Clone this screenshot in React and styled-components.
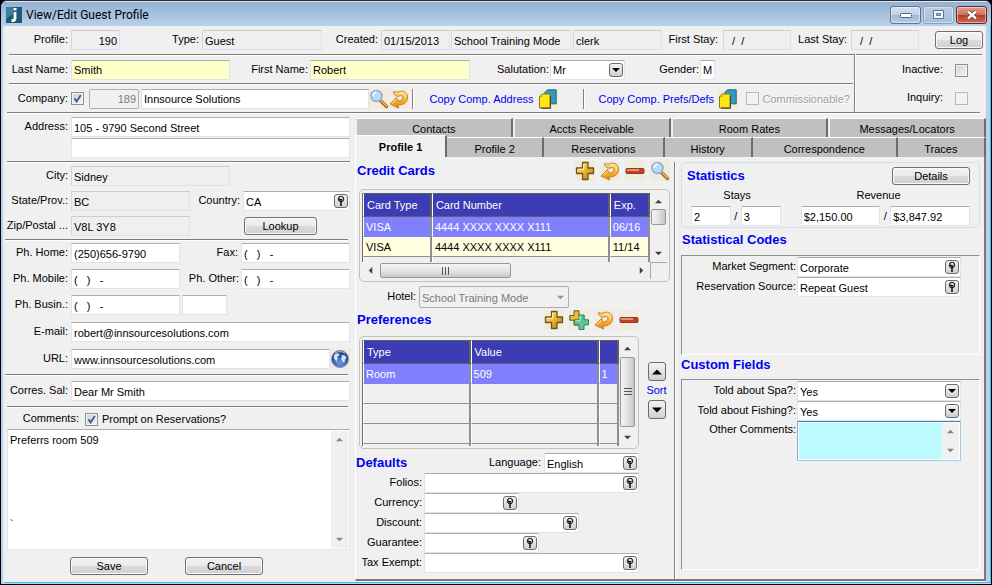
import React from "react";
import styled, { createGlobalStyle, css } from "styled-components";

const GlobalStyle = createGlobalStyle`
  * { box-sizing: border-box; }
  html, body { margin: 0; background: #000; }
  body, input, select, textarea, button, table {
    font-family: "Liberation Sans", Arial, sans-serif;
    font-size: 11px;
    color: #000;
  }
`;

/* ---------- window frame ---------- */

const Frame = styled.div`
  min-height: 100vh;
  display: flex;
  flex-direction: column;
  border: 1px solid #000;
  border-top-color: #2b2b30;
  border-radius: 7px 7px 0 0;
  background: #b9d1ea;
  overflow: hidden;
`;

const TitleBar = styled.header`
  flex: none;
  height: 25px;
  display: flex;
  align-items: center;
  gap: 4px;
  padding: 1px 4px 0 5px;
  border-top: 1px solid #dfe9f5;
  background: linear-gradient(#94b1d3, #b9d1ea);
`;

const Title = styled.h1`
  flex: 1;
  margin: 0;
  font: 12px Roboto, "Open Sans", sans-serif;
  line-height: 18px;
`;

const CaptionButton = styled.button`
  width: 31px;
  height: 18px;
  padding: 0;
  display: grid;
  place-items: center;
  border: 1px solid ${(p) => (p.$close ? "#5c2a2c" : p.$dim ? "#8ba2bd" : "#5d7390")};
  border-radius: 3px;
  box-shadow: inset 0 0 0 1px rgba(255, 255, 255, 0.45);
  background: ${(p) =>
    p.$close
      ? "linear-gradient(#e3a093 0%, #d2705f 48%, #bb3a25 50%, #cf6a4f 100%)"
      : p.$dim
        ? "linear-gradient(#b9cde4, #a6bedb)"
        : "linear-gradient(#d3e0ef 0%, #bfd1e6 48%, #9fb7d3 50%, #b8cde5 100%)"};
`;

const CaptionButtons = styled.div`
  display: flex;
  gap: 2px;
`;

const Client = styled.main`
  flex: 1;
  display: flex;
  flex-direction: column;
  margin: 0 0 1px 2px;
  border-left: 2px solid #e4eefa;
  border-right: 1px solid #35c3f3;
  border-bottom: 1px solid #35c3f3;
  padding: 0 4px 1px 0;
  background: linear-gradient(to left, #b9d1ea 4px, #f0f0f0 4px);
`;

/* ---------- shared parts ---------- */

const Row = styled.div`
  flex: none;
  display: flex;
  align-items: center;
  min-height: 20px;
  min-width: 0;
  margin-top: ${(p) => p.$top || 0}px;
  padding-right: ${(p) => p.$end || 0}px;
`;

const Label = styled.label`
  flex: none;
  width: ${(p) => p.$w}px;
  padding: 0 ${(p) => p.$pad ?? 3}px 2px 0;
  text-align: right;
  white-space: nowrap;
  line-height: 16px;
`;

const Spacer = styled.div`
  flex: ${(p) => (p.$grow ? `${p.$w} 1 ${p.$w}px` : `0 0 ${p.$w}px`)};
`;

const Divider = styled.hr`
  flex: none;
  width: auto;
  height: 2px;
  margin: ${(p) => p.$m || "0"};
  border: 0;
  border-top: 1px solid #7d7d7d;
  background: #fff;
`;

const sunken = css`
  border: 1px solid #e0e3ea;
  border-top-color: #abadb3;
  border-radius: 1px;
  background: #fff;
`;

const sized = css`
  flex: ${(p) => (p.$fixed ? `0 0 ${p.$w}px` : `${p.$w} 1 ${p.$w}px`)};
  min-width: 0;
  width: 0;
`;

const Input = styled.input`
  ${sunken}
  ${sized}
  height: 20px;
  padding: 1px 2px 0;
  outline: 0;
  text-align: ${(p) => p.$align || "left"};
  ${(p) => p.readOnly && "background: #efefef; border-color: #c9ccd2 #dde2ea #dde2ea #d2d6dc;"}
  ${(p) => p.$required && "background: #ffffc8;"}
  ${(p) => p.disabled && "background: #f0f0f0; color: #7d7d7d; border-color: #afafaf; border-radius: 2px;"}
`;

const Combo = styled.div`
  ${sunken}
  ${sized}
  display: flex;
  align-items: center;
  height: 20px;
  padding-right: 1px;
`;

const ComboInput = styled.input`
  flex: 1;
  width: 0;
  min-width: 0;
  height: 18px;
  padding: 1px 2px 0;
  border: 0;
  outline: 0;
  background: none;
`;

const ComboSelect = styled.select`
  flex: 1;
  height: 18px;
  padding: 1px 2px 0;
  border: 0;
  outline: 0;
  appearance: none;
  background: none;
`;

const chip = css`
  flex: none;
  width: 14px;
  height: 14px;
  padding: 0;
  display: grid;
  place-items: center;
  border: 1px solid #6a6a6a;
  border-radius: 3px;
  background: linear-gradient(#f4f4f4, #cfcfcf);
`;

const Chip = styled.button`
  ${chip}
`;

const ArrowChip = styled.span`
  ${chip}
  pointer-events: none;
`;

const PushButton = styled.button`
  flex: none;
  width: ${(p) => p.$w}px;
  height: 18px;
  padding: 0;
  border: 1px solid #707070;
  border-radius: 3px;
  box-shadow: inset 0 0 0 1px #fafafa;
  background: linear-gradient(#f2f2f2 0%, #ebebeb 48%, #dcdcdc 52%, #cfcfcf 100%);
  line-height: 15px;
`;

const Check = styled.input.attrs({ type: "checkbox" })`
  flex: none;
  appearance: none;
  width: 13px;
  height: 13px;
  margin: 0;
  border: 1px solid ${(p) => (p.$dim ? "#b8b8b8" : "#8e8f8f")};
  box-shadow: inset 0 0 0 1px #f4f4f4;
  background: ${(p) => (p.$dim ? "#f2f2f2" : "linear-gradient(135deg, #cbcfd5, #f6f6f6)")};
  &:checked {
    background: url("data:image/svg+xml,%3Csvg xmlns='http://www.w3.org/2000/svg' viewBox='0 0 11 11'%3E%3Cpath d='M2.5 5.2 4.6 8.4 8.8 2' fill='none' stroke='%23435a9c' stroke-width='1.9'/%3E%3C/svg%3E"),
      linear-gradient(135deg, #cbcfd5, #f6f6f6);
  }
`;

const IconButton = styled.button`
  flex: none;
  width: 20px;
  height: 20px;
  padding: 0;
  border: 0;
  background: #efebdd;
  svg { display: block; }
`;

const ActionLink = styled.a`
  flex: none;
  width: ${(p) => p.$w}px;
  color: #0000f0;
  text-decoration: none;
  white-space: nowrap;
`;

const VLine = styled.span`
  flex: none;
  width: 2px;
  height: 20px;
  border-left: 1px solid #808080;
  background: #fff;
`;

const Heading = styled.h2`
  flex: ${(p) => (p.$grow ? 1 : "none")};
  margin: 0;
  font-size: 13px;
  line-height: 18px;
  font-weight: bold;
  color: #0000f0;
  white-space: nowrap;
`;

/* ---------- icons ---------- */

const Triangle = ({ dir = "down", size = 7, color = "#000" }) => {
  const shapes = {
    down: "M0 2h8L4 6z",
    up: "M0 6h8L4 2z",
    left: "M6 0v8L2 4z",
    right: "M2 0v8l4-4z",
  };
  return (
    <svg width={size} height={size} viewBox="0 0 8 8" aria-hidden="true">
      <path d={shapes[dir]} fill={color} />
    </svg>
  );
};

const KeyGlyph = () => (
  <svg width="10" height="12" viewBox="0 0 10 12" aria-hidden="true">
    <circle cx="5" cy="4" r="2.800" fill="#a8a8a8" stroke="#1c1c1c" />
    <path d="M3 4.500h3M5 5.500v5.500" fill="none" stroke="#111" strokeWidth="1.500" />
    <circle cx="5.200" cy="3" r="0.900" fill="#fff" />
  </svg>
);

const PlusIcon = () => (
  <svg width="20" height="20" viewBox="0 0 20 20" aria-hidden="true">
    <defs>
      <linearGradient id="gold" x1="0" y1="0" x2="1" y2="1">
        <stop offset="0" stopColor="#fff2a0" />
        <stop offset="0.5" stopColor="#eab52c" />
        <stop offset="1" stopColor="#b87408" />
      </linearGradient>
    </defs>
    <path d="M7.500 1.500h5.500v5.500H18.500v5.500H13V18.500H7.500v-6H1.500V7h6z" fill="url(#gold)" stroke="#6e5420" strokeWidth="1.300" strokeLinejoin="round" />
    <path d="M8.700 8.300V3M3 8.300h5.700" stroke="#fff6c4" fill="none" />
  </svg>
);

const MultiPlusIcon = () => (
  <svg width="20" height="20" viewBox="0 0 20 20" aria-hidden="true">
    <path d="M5 .8h5V5.500h5v4.700h-5V15H5v-4.800H.8V5.500H5z" fill="#edbb35" stroke="#6e5420" strokeLinejoin="round" />
    <path d="M10 5h5v4.800h4.500v5H15v4.700h-5v-4.700H5.500v-5H10z" fill="#5fc796" stroke="#31805c" strokeLinejoin="round" />
    <path d="M11 10.800V6M6.500 10.800H11" stroke="#c1f3da" fill="none" />
  </svg>
);

const RevertIcon = () => (
  <svg width="20" height="20" viewBox="0 0 20 20" aria-hidden="true">
    <defs>
      <linearGradient id="amber" x1="0" y1="0" x2="0" y2="1">
        <stop offset="0" stopColor="#ffdf8c" />
        <stop offset="0.55" stopColor="#fbae2e" />
        <stop offset="1" stopColor="#ea8608" />
      </linearGradient>
    </defs>
    <path
      d="M4.500 2.500C4.500 6 8 8.200 11 6.800c2.500-1 3.800 1.700 2 3.700-1 1.100-2.400 1.500-4 1.500L7.500 8.500 1 15l8.500 4-.5-3c5 .2 9-2.300 9.500-6.800C19 4.800 15 1.200 11.500 2.300 9 3.300 6.500 3.500 4.500 2.500z"
      fill="url(#amber)"
      stroke="#b87a2c"
      strokeWidth="0.900"
      strokeLinejoin="round"
    />
    <path d="M10.500 4.200c3.500-1.400 6.500 1 6 4.600M3 14.600l4-4" stroke="#fff0bf" fill="none" />
  </svg>
);

const MinusIcon = () => (
  <svg width="20" height="20" viewBox="0 0 20 20" aria-hidden="true">
    <rect x="1" y="7.500" width="18" height="5" rx="1" fill="#d43a16" stroke="#7a4230" />
    <path d="M2 9h12" stroke="#f6a88c" strokeWidth="1.500" />
  </svg>
);

const SearchIcon = () => (
  <svg width="20" height="20" viewBox="0 0 20 20" aria-hidden="true">
    <path d="m11.500 11.500 6 6" stroke="#a8641c" strokeWidth="3.400" strokeLinecap="round" />
    <path d="m12 11.500 5.500 5.500" stroke="#f2b35c" strokeWidth="1.600" strokeLinecap="round" />
    <circle cx="7.500" cy="7" r="5.500" fill="#b7dbf8" stroke="#8fabd6" strokeWidth="1.500" />
    <path d="M4 7a3.500 3.500 0 0 1 3.500-3.600" stroke="#fff" strokeWidth="1.600" fill="none" />
  </svg>
);

const CopyIcon = () => (
  <svg width="20" height="20" viewBox="0 0 20 20" aria-hidden="true">
    <path d="M9.500.8h8.700v14H7V3.300z" fill="#2c9fc0" stroke="#2a6678" />
    <path d="M4 5h8v13.800H1.500V7.600z" fill="#ffe714" stroke="#8c7a14" />
    <path d="M4 5v2.600H1.500z" fill="#fff9b5" stroke="#8c7a14" strokeWidth=".6" />
    <path d="M3 19.300h9.500V7" stroke="#4a4420" fill="none" />
  </svg>
);

const GlobeIcon = () => (
  <svg width="20" height="20" viewBox="0 0 20 20" aria-hidden="true">
    <defs>
      <radialGradient id="globe" cx=".5" cy=".75" r=".8">
        <stop offset="0" stopColor="#6f9be0" />
        <stop offset=".6" stopColor="#2b4f9d" />
        <stop offset="1" stopColor="#1d3270" />
      </radialGradient>
    </defs>
    <circle cx="10" cy="10" r="8.500" fill="url(#globe)" stroke="#8290b5" />
    <path d="M4 6.500C5.500 4.500 7.500 4 9.500 5L8.500 7 7 8l1 2-1.500 1 1 2.500C5.500 12.500 5 10 3.800 9zM11.500 6l3.500.5 1.500 2.700-1.500 1.300-.7 3.500-1.800-1.500-1.500-3 1-1.500z" fill="#d6e3f6" />
    <path d="M5 4.500a7.500 7.500 0 0 1 10 0" stroke="#a9bce6" fill="none" />
  </svg>
);

const AppIcon = () => (
  <svg width="16" height="16" viewBox="0 0 16 16" aria-hidden="true">
    <rect width="16" height="16" fill="#1d5a78" />
    <path d="M0 0h7v7L0 12z" fill="#3e7f9c" />
    <rect x="7.500" y="1" width="3" height="2.500" fill="#fff" />
    <path d="M9 5v6.500c0 1.700-1 2.300-3.500 2" stroke="#fff" strokeWidth="2.800" fill="none" />
  </svg>
);

/* ---------- header ---------- */

const HeaderLower = styled.div`
  display: flex;
`;

const HeaderRows = styled.div`
  flex: 1;
  min-width: 0;
`;

const HeaderFlags = styled.div`
  flex: 0 0 132px;
  margin-top: -2px;
  padding: 2px 18px 0 0;
  border-left: 1px solid #808080;
  box-shadow: inset 1px 0 #fff;
`;

const HeaderRow = styled(Row)`
  height: ${(p) => p.$h || 27}px;
`;

const FlagRow = styled(Row)`
  height: 28px;
  justify-content: flex-end;
`;

const DimLabel = styled.label`
  padding-left: 4px;
  color: #a0a0a0;
  white-space: nowrap;
  text-shadow: 1px 1px #fff;
`;

/* ---------- columns ---------- */

const Columns = styled.div`
  flex: 1;
  display: grid;
  grid-template-columns: minmax(0, 345fr) minmax(0, 631fr);
  column-gap: 5px;
`;

const ContactColumn = styled.section`
  display: flex;
  flex-direction: column;
  padding: 3px 0 6px;
`;

const MemoBox = styled.div`
  ${sunken}
  flex: ${(p) => p.$grow || "none"};
  display: flex;
  margin-left: ${(p) => p.$left || 0}px;
  min-height: ${(p) => p.$h}px;
  padding: 1px;
  ${(p) => p.$focus && "flex: 165 1 165px; min-width: 0; border-color: #3c7fb1 #a4cbe8 #a4cbe8 #7fb0dc;"}
`;

const Memo = styled.textarea`
  flex: 1;
  min-width: 0;
  width: 0;
  padding: 2px 1px;
  border: 0;
  outline: 0;
  resize: none;
  overflow: hidden;
  line-height: 14px;
  background: ${(p) => (p.$focus ? "#bcfaff" : "#fff")};
`;

const VTrack = styled.div`
  flex: none;
  width: 17px;
  display: flex;
  flex-direction: column;
  align-items: center;
  justify-content: space-between;
  padding: 5px 0;
  background: #f0f0f0;
`;

const VThumb = styled.div`
  width: 15px;
  flex: ${(p) => (p.$h ? `0 0 ${p.$h}px` : "1")};
  margin: ${(p) => p.$m};
  display: grid;
  place-items: center;
  border: 1px solid #979797;
  border-radius: 2px;
  background: linear-gradient(to right, #f5f5f5, #e3e3e3 48%, #c6c6c6);
`;

const HTrack = styled.div`
  display: flex;
  align-items: center;
  height: 17px;
  padding: 0 5px;
  background: #f0f0f0;
`;

const HThumb = styled.div`
  flex: 0 1 131px;
  height: 15px;
  margin: 0 auto 0 6px;
  display: grid;
  place-items: center;
  border: 1px solid #979797;
  border-radius: 2px;
  background: linear-gradient(#f5f5f5, #e6e6e6 48%, #c9c9c9);
`;

const Grip = ({ vertical }) => (
  <svg width="8" height="8" viewBox="0 0 8 8" aria-hidden="true">
    <path d={vertical ? "M.5 0v8M3.500 0v8M6.500 0v8" : "M0 .5h8M0 3.500h8M0 6.500h8"} stroke="#555" />
  </svg>
);

const FootButtons = styled.div`
  display: flex;
  gap: 37px;
  margin: 7px 0 0 65px;
`;

/* ---------- tabs ---------- */

const Notebook = styled.section`
  display: flex;
  flex-direction: column;
  padding-top: 4px;
`;

const TabRow = styled.div`
  display: flex;
  flex: none;
  height: ${(p) => p.$h}px;
  margin-left: ${(p) => p.$left || 0}px;
  gap: ${(p) => p.$gap || 0}px;
`;

const Tab = styled.button`
  flex: ${(p) => p.$w} 1 0;
  min-width: 0;
  padding: 2px 0 0;
  border: 0;
  border-top: 1px solid #fff;
  border-right: 2px solid #6c6c6c;
  background: #c0c0c0;
  white-space: nowrap;
  ${(p) =>
    p.$active &&
    "margin-top: -2px; padding-bottom: 2px; border-left: 1px solid #fff; background: #f0f0f0; font-weight: bold;"}
`;

const Panel = styled.div`
  flex: 1;
  display: grid;
  grid-template-columns: minmax(0, 318fr) minmax(0, 310fr);
  border-right: 2px solid #7a7a7a;
  border-bottom: 2px solid #7a7a7a;
  border-left: 1px solid #fff;
`;

const Half = styled.div`
  display: flex;
  flex-direction: column;
  min-width: 0;
  padding: ${(p) => p.$p};
`;

const SideHalf = styled(Half)`
  margin-top: 5px;
  border-left: 1px solid #808080;
  box-shadow: inset 1px 0 #fff;
`;

const Tools = styled.div`
  display: flex;
  gap: 5px;
`;

/* ---------- grids ---------- */

const GridFrame = styled.div`
  flex: ${(p) => (p.$grow ? "1" : "none")};
  min-width: 0;
  display: flex;
  height: ${(p) => p.$h}px;
  margin: ${(p) => p.$m};
  padding: 3px 2px 2px;
  border: 1px solid #c3c4ab;
  border-radius: 5px;
  overflow: hidden;
`;

const GridMain = styled.div`
  flex: 1;
  min-width: 0;
  display: flex;
  flex-direction: column;
`;

const GridClip = styled.div`
  flex: 1;
  min-height: 0;
  overflow: hidden;
`;

const GridSide = styled.div`
  flex: none;
  width: 17px;
  display: flex;
  flex-direction: column;
`;

const SideTrack = styled(VTrack)`
  flex: 1;
`;

const Corner = styled.div`
  height: 17px;
  border: 1px solid #a8a8a8;
  border-right: 0;
  border-bottom: 0;
`;

const Table = styled.table`
  width: 100%;
  table-layout: fixed;
  border-collapse: separate;
  border-spacing: 0;
  border-left: 1px solid #6b6b6b;
`;

const Th = styled.th`
  width: ${(p) => p.$w};
  height: 24px;
  padding: 0 0 0 3px;
  border: 1px solid #5f5f5f;
  border-left-color: #fff;
  border-right-width: 2px;
  background: #3c3cb4;
  color: #fff;
  font-weight: normal;
  text-align: left;
`;

const Td = styled.td`
  height: 20px;
  padding: 0 0 0 2px;
  border-left: 1px solid #fff;
  border-right: 2px solid #8f8f8f;
  border-bottom: 1px solid #8f8f8f;
  white-space: nowrap;
`;

const Tr = styled.tr`
  background: ${(p) => ({ selected: "#8080ff", alt: "#ffffdf" })[p.$tone] || "#f0f0f0"};
  td {
    color: ${(p) => (p.$tone === "selected" ? "#fff" : "#000")};
    border-bottom-color: ${(p) => (p.$tone === "selected" ? "#8080ff" : "#8f8f8f")};
  }
`;

const HotelSelect = styled.div`
  flex: none;
  width: 150px;
  height: 22px;
  display: flex;
  align-items: center;
  padding-right: 4px;
  border: 1px solid #afafaf;
  border-radius: 2px;
  select { color: #7a7a7a; opacity: 1; }
`;

const SortColumn = styled.div`
  flex: 0 0 35px;
  display: flex;
  flex-direction: column;
  align-items: center;
  justify-content: center;
  gap: 3px;
  padding-top: 2px;
  color: #0000f0;
  line-height: 13px;
`;

const SortButton = styled(Chip)`
  width: 18px;
  height: 19px;
`;

/* ---------- right-hand groups ---------- */

const StatsGroup = styled.div`
  margin: 0 4px 0 5px;
  padding: 3px 9px 1px 5px;
  border: 1px solid #d5dfe5;
  border-radius: 4px;
`;

const StatCaption = styled.span`
  flex: ${(p) => p.$w} 1 0;
  padding-bottom: 2px;
  text-align: center;
`;

const Slash = styled.span`
  flex: 0 0 10px;
  text-align: center;
`;

const Group = styled.div`
  flex: ${(p) => p.$flex};
  margin: ${(p) => p.$m};
  padding: 1px 18px 0 0;
  border: 1px solid #fff;
  border-top-color: #8f8f8f;
  border-left-color: #8f8f8f;
`;

const TopRow = styled(Row)`
  align-items: flex-start;
`;

/* ---------- composed controls ---------- */

const Lookup = ({ id, value, w, fixed, name }) => (
  <Combo $w={w} $fixed={fixed}>
    <ComboInput id={id} defaultValue={value} />
    <Chip type="button" aria-label={`Look up ${name}`}>
      <KeyGlyph />
    </Chip>
  </Combo>
);

const Dropdown = ({ id, value, w, fixed }) => (
  <Combo $w={w} $fixed={fixed}>
    <ComboSelect id={id} defaultValue={value}>
      <option>{value}</option>
    </ComboSelect>
    <ArrowChip>
      <Triangle size={8} />
    </ArrowChip>
  </Combo>
);

const Tool = ({ label, children }) => (
  <IconButton type="button" aria-label={label}>
    {children}
  </IconButton>
);

const cards = [
  ["VISA", "4444 XXXX XXXX X111", "06/16", "selected"],
  ["VISA", "4444 XXXX XXXX X111", "11/14", "alt"],
  ["", "", "", ""],
];

const prefs = [
  ["Room", "509", "1", "selected"],
  ["", "", "", ""],
  ["", "", "", ""],
  ["", "", "", ""],
  ["", "", "", ""],
];

const GridTable = ({ columns, rows }) => (
  <Table>
    <thead>
      <tr>
        {columns.map(([name, width], i) => (
          <Th key={i} $w={width}>{name}</Th>
        ))}
      </tr>
    </thead>
    <tbody>
      {rows.map((row, r) => (
        <Tr key={r} $tone={row[3]}>
          {row.slice(0, 3).map((cell, c) => (
            <Td key={c}>{cell}</Td>
          ))}
        </Tr>
      ))}
    </tbody>
  </Table>
);

const defaultFields = [
  ["Folios", 214, false],
  ["Currency", 95, true],
  ["Discount", 155, true],
  ["Guarantee", 115, true],
  ["Tax Exempt", 214, false],
];

function Header() {
  return (
    <>
      <HeaderRow $h={28} $end={3}>
        <Label $w={66} htmlFor="profile">Profile:</Label>
        <Input id="profile" $w={49} $align="right" readOnly value="190" />
        <Label $w={82} htmlFor="type">Type:</Label>
        <Input id="type" $w={120} readOnly value="Guest" />
        <Label $w={59} htmlFor="created">Created:</Label>
        <Input id="created" $w={69} readOnly value="01/15/2013" />
        <Spacer $w={1} />
        <Input aria-label="Created at" $w={120} readOnly value="School Training Mode" />
        <Spacer $w={2} />
        <Input aria-label="Created by" $w={89} readOnly value="clerk" />
        <Label $w={61} $pad={5} htmlFor="first-stay">First Stay:</Label>
        <Input id="first-stay" $w={68} readOnly value="  /  /" />
        <Label $w={60} $pad={4} htmlFor="last-stay">Last Stay:</Label>
        <Input id="last-stay" $w={68} readOnly value="  /  /" />
        <Spacer $w={16} />
        <PushButton type="button" $w={48}>Log</PushButton>
      </HeaderRow>
      <Divider $m="0 4px 0 4px" />
      <HeaderLower>
        <HeaderRows>
          <HeaderRow>
            <Label $w={66} htmlFor="last-name">Last Name:</Label>
            <Input id="last-name" $w={159} $required defaultValue="Smith" />
            <Label $w={80} $pad={2} htmlFor="first-name">First Name:</Label>
            <Input id="first-name" $w={160} $required defaultValue="Robert" />
            <Label $w={80} $pad={1} htmlFor="salutation">Salutation:</Label>
            <Dropdown id="salutation" value="Mr" w={75} />
            <Label $w={75} $pad={1} htmlFor="gender">Gender:</Label>
            <Input id="gender" $w={15} $fixed defaultValue="M" />
            <Spacer $w={139} $grow />
          </HeaderRow>
          <Divider $m="0 1px 0 4px" />
          <HeaderRow>
            <Label $w={66} htmlFor="company">Company:</Label>
            <Check id="company" defaultChecked />
            <Spacer $w={5} />
            <Input aria-label="Company number" $w={50} $fixed $align="right" disabled value="189" />
            <Spacer $w={2} />
            <Input aria-label="Company name" $w={228} defaultValue="Innsource Solutions" />
            <Tool label="Find company"><SearchIcon /></Tool>
            <Tool label="Revert company"><RevertIcon /></Tool>
            <Spacer $w={3} />
            <VLine />
            <Spacer $w={16} />
            <ActionLink href="#address" $w={108}>Copy Comp. Address</ActionLink>
            <Tool label="Copy company address"><CopyIcon /></Tool>
            <Spacer $w={25} />
            <VLine />
            <Spacer $w={14} />
            <ActionLink href="#prefs" $w={119}>Copy Comp. Prefs/Defs</ActionLink>
            <Tool label="Copy company preferences"><CopyIcon /></Tool>
            <Spacer $w={8} />
            <Check id="commissionable" $dim disabled />
            <DimLabel htmlFor="commissionable">Commissionable?</DimLabel>
            <Spacer $w={4} />
          </HeaderRow>
        </HeaderRows>
        <HeaderFlags>
          <FlagRow>
            <Label $w={88} $pad={12} htmlFor="inactive">Inactive:</Label>
            <Check id="inactive" />
          </FlagRow>
          <FlagRow>
            <Label $w={88} $pad={12} htmlFor="inquiry">Inquiry:</Label>
            <Check id="inquiry" $dim />
          </FlagRow>
        </HeaderFlags>
      </HeaderLower>
      <Divider $m="0 6px 0 2px" />
    </>
  );
}

function Contact() {
  return (
    <ContactColumn>
      <Row>
        <Label $w={66} htmlFor="address">Address:</Label>
        <Input id="address" $w={279} defaultValue="105 - 9790 Second Street" />
      </Row>
      <Row $top={1}>
        <Spacer $w={66} />
        <Input aria-label="Address line 2" $w={279} />
      </Row>
      <Divider $m="3px 0 3px 2px" />
      <Row>
        <Label $w={66} htmlFor="city">City:</Label>
        <Input id="city" $w={159} readOnly value="Sidney" />
        <Spacer $w={120} $grow />
      </Row>
      <Row $top={5}>
        <Label $w={66} htmlFor="state">State/Prov.:</Label>
        <Input id="state" $w={119} readOnly value="BC" />
        <Label $w={53} htmlFor="country">Country:</Label>
        <Lookup id="country" name="country" value="CA" w={107} />
      </Row>
      <Row $top={5}>
        <Label $w={66} htmlFor="zip">Zip/Postal ...</Label>
        <Input id="zip" $w={119} readOnly value="V8L 3Y8" />
        <Spacer $w={54} />
        <PushButton type="button" $w={73}>Lookup</PushButton>
        <Spacer $w={33} $grow />
      </Row>
      <Divider $m="3px 2px 2px 0" />
      <Row>
        <Label $w={66} htmlFor="home">Ph. Home:</Label>
        <Input id="home" $w={109} defaultValue="(250)656-9790" />
        <Label $w={61} htmlFor="fax">Fax:</Label>
        <Input id="fax" $w={109} defaultValue="(   )   -" />
      </Row>
      <Row $top={6}>
        <Label $w={66} htmlFor="mobile">Ph. Mobile:</Label>
        <Input id="mobile" $w={109} defaultValue="(   )   -" />
        <Label $w={61} $pad={2} htmlFor="other">Ph. Other:</Label>
        <Input id="other" $w={109} defaultValue="(   )   -" />
      </Row>
      <Row $top={6}>
        <Label $w={66} htmlFor="business">Ph. Busin.:</Label>
        <Input id="business" $w={109} defaultValue="(   )   -" />
        <Spacer $w={2} />
        <Input aria-label="Business extension" $w={45} />
        <Spacer $w={123} $grow />
      </Row>
      <Row $top={7}>
        <Label $w={66} htmlFor="email">E-mail:</Label>
        <Input id="email" $w={279} defaultValue="robert@innsourcesolutions.com" />
      </Row>
      <Row $top={7}>
        <Label $w={66} htmlFor="url">URL:</Label>
        <Input id="url" $w={259} defaultValue="www.innsourcesolutions.com" />
        <Tool label="Open website"><GlobeIcon /></Tool>
      </Row>
      <Divider $m="5px 2px 5px 0" />
      <Row>
        <Label $w={66} htmlFor="sal">Corres. Sal:</Label>
        <Input id="sal" $w={279} defaultValue="Dear Mr Smith" />
      </Row>
      <Divider $m="5px 2px 1px 2px" />
      <Row>
        <Label $w={80} $pad={6} htmlFor="comments">Comments:</Label>
        <Check id="prompt" defaultChecked />
        <Spacer $w={4} />
        <label htmlFor="prompt">Prompt on Reservations?</label>
      </Row>
      <MemoBox $grow="1" $left={2} $h={120}>
        <Memo id="comments" defaultValue={"Preferrs room 509\n\n\n\n\n\n`"} />
        <VTrack>
          <Triangle dir="up" color="#858585" />
          <Triangle color="#858585" />
        </VTrack>
      </MemoBox>
      <FootButtons>
        <PushButton type="button" $w={78}>Save</PushButton>
        <PushButton type="button" $w={78}>Cancel</PushButton>
      </FootButtons>
    </ContactColumn>
  );
}

function ProfilePanel() {
  return (
    <Half $p="4px 0 5px 0">
      <Row $end={4}>
        <Spacer $w={1} />
        <Heading $grow>Credit Cards</Heading>
        <Tools>
          <Tool label="Add card"><PlusIcon /></Tool>
          <Tool label="Revert card"><RevertIcon /></Tool>
          <Tool label="Remove card"><MinusIcon /></Tool>
          <Tool label="View card"><SearchIcon /></Tool>
        </Tools>
      </Row>
      <GridFrame $h={93} $m="8px 4px 0 3px">
        <GridMain>
          <GridClip>
            <GridTable columns={[["Card Type", "24%"], ["Card Number", "62%"], ["Exp.", "14%"]]} rows={cards} />
          </GridClip>
          <HTrack>
            <Triangle dir="left" color="#404040" />
            <HThumb><Grip vertical /></HThumb>
            <Triangle dir="right" color="#404040" />
          </HTrack>
        </GridMain>
        <GridSide>
          <SideTrack>
            <Triangle dir="up" color="#404040" />
            <VThumb $h={16} $m="4px 0 auto" />
            <Triangle color="#404040" />
          </SideTrack>
          <Corner />
        </GridSide>
      </GridFrame>
      <Row $top={4}>
        <Label $w={63} htmlFor="hotel">Hotel:</Label>
        <HotelSelect>
          <ComboSelect id="hotel" disabled defaultValue="School Training Mode">
            <option>School Training Mode</option>
          </ComboSelect>
          <Triangle color="#909090" />
        </HotelSelect>
      </Row>
      <Row $top={2} $end={35}>
        <Spacer $w={1} />
        <Heading $grow>Preferences</Heading>
        <Tools>
          <Tool label="Add preference"><PlusIcon /></Tool>
          <Tool label="Add several preferences"><MultiPlusIcon /></Tool>
          <Tool label="Revert preference"><RevertIcon /></Tool>
          <Tool label="Remove preference"><MinusIcon /></Tool>
        </Tools>
      </Row>
      <Row>
        <GridFrame $grow $h={113} $m="6px 0 0 3px">
          <GridMain>
            <GridClip>
              <GridTable columns={[["Type", "42%"], ["Value", "50%"], ["", "8%"]]} rows={prefs} />
            </GridClip>
          </GridMain>
          <GridSide>
            <SideTrack>
              <Triangle dir="up" color="#404040" />
              <VThumb $m="5px 0 7px"><Grip /></VThumb>
              <Triangle color="#404040" />
            </SideTrack>
          </GridSide>
        </GridFrame>
        <SortColumn>
          <SortButton type="button" aria-label="Sort up"><Triangle dir="up" size={10} /></SortButton>
          <span>Sort</span>
          <SortButton type="button" aria-label="Sort down"><Triangle size={10} /></SortButton>
        </SortColumn>
      </Row>
      <Row $top={4} $end={35}>
        <Heading $grow>Defaults</Heading>
        <Label $w={60} htmlFor="language">Language:</Label>
        <Lookup id="language" name="language" value="English" w={95} fixed />
      </Row>
      {defaultFields.map(([name, w, fixed]) => (
        <Row key={name} $end={35}>
          <Label $w={68} $pad={2} htmlFor={name}>{name}:</Label>
          <Lookup id={name} name={name} w={w} fixed={fixed} />
        </Row>
      ))}
    </Half>
  );
}

function StatsPanel() {
  return (
    <SideHalf $p="0 0 9px 1px">
      <StatsGroup>
        <Row>
          <Heading $grow>Statistics</Heading>
          <PushButton type="button" $w={78}>Details</PushButton>
        </Row>
        <Row>
          <StatCaption $w={104}>Stays</StatCaption>
          <StatCaption $w={190}>Revenue</StatCaption>
        </Row>
        <Row>
          <Spacer $w={4} />
          <Input aria-label="Stays this year" $w={40} defaultValue="2" />
          <Slash>/</Slash>
          <Input aria-label="Stays in total" $w={40} defaultValue="3" />
          <Spacer $w={20} />
          <Input aria-label="Revenue this year" $w={80} defaultValue="$2,150.00" />
          <Slash>/</Slash>
          <Input aria-label="Revenue in total" $w={80} defaultValue="$3,847.92" />
        </Row>
      </StatsGroup>
      <Row $top={2}>
        <Spacer $w={6} />
        <Heading>Statistical Codes</Heading>
      </Row>
      <Group $flex="0 0 100px" $m="5px 4px 0 5px">
        <Row>
          <Label $w={115} $pad={1} htmlFor="segment">Market Segment:</Label>
          <Lookup id="segment" name="market segment" value="Corporate" w={165} />
        </Row>
        <Row>
          <Label $w={115} $pad={1} htmlFor="source">Reservation Source:</Label>
          <Lookup id="source" name="reservation source" value="Repeat Guest" w={165} />
        </Row>
      </Group>
      <Row>
        <Spacer $w={5} />
        <Heading>Custom Fields</Heading>
      </Row>
      <Group $flex="1" $m="4px 4px 0 5px">
        <Row>
          <Label $w={115} $pad={1} htmlFor="spa">Told about Spa?:</Label>
          <Dropdown id="spa" value="Yes" w={165} />
        </Row>
        <Row>
          <Label $w={115} $pad={1} htmlFor="fishing">Told about Fishing?:</Label>
          <Dropdown id="fishing" value="Yes" w={165} />
        </Row>
        <TopRow>
          <Label $w={115} $pad={1} htmlFor="other-comments">Other Comments:</Label>
          <MemoBox $focus $h={40}>
            <Memo id="other-comments" $focus />
            <VTrack>
              <Triangle dir="up" color="#858585" />
              <Triangle color="#858585" />
            </VTrack>
          </MemoBox>
        </TopRow>
      </Group>
    </SideHalf>
  );
}

export default function App() {
  return (
    <>
      <GlobalStyle />
      <Frame>
        <TitleBar>
          <AppIcon />
          <Title>View/Edit Guest Profile</Title>
          <CaptionButtons>
            <CaptionButton type="button" aria-label="Minimize">
              <svg width="12" height="6" viewBox="0 0 12 6"><rect x=".5" y="1.500" width="11" height="4" rx="1" fill="#fff" stroke="#55657c" /></svg>
            </CaptionButton>
            <CaptionButton type="button" aria-label="Maximize" $dim>
              <svg width="11" height="9" viewBox="0 0 11 9"><path d="M.5.5h10v8H.5zM3.500 3.500h4v2h-4z" fill="#f4f8fc" fillRule="evenodd" stroke="#5f7088" /></svg>
            </CaptionButton>
            <CaptionButton type="button" aria-label="Close" $close>
              <svg width="12" height="10" viewBox="0 0 12 10">
                <path d="m2 1.500 8 7m0-7-8 7" stroke="#5b3a3e" strokeWidth="4" />
                <path d="m2 1.500 8 7m0-7-8 7" stroke="#fff" strokeWidth="2.400" />
              </svg>
            </CaptionButton>
          </CaptionButtons>
        </TitleBar>
        <Client>
          <Header />
          <Columns>
            <Contact />
            <Notebook>
              <TabRow $h={19} $left={2} $gap={2}>
                {["Contacts", "Accts Receivable", "Room Rates", "Messages/Locators"].map((name) => (
                  <Tab key={name} type="button" $w={156}>{name}</Tab>
                ))}
              </TabRow>
              <TabRow $h={20}>
                <Tab type="button" $w={91} $active>Profile 1</Tab>
                <Tab type="button" $w={97}>Profile 2</Tab>
                <Tab type="button" $w={121}>Reservations</Tab>
                <Tab type="button" $w={88}>History</Tab>
                <Tab type="button" $w={146}>Correspondence</Tab>
                <Tab type="button" $w={88}>Traces</Tab>
              </TabRow>
              <Panel>
                <ProfilePanel />
                <StatsPanel />
              </Panel>
            </Notebook>
          </Columns>
        </Client>
      </Frame>
    </>
  );
}
